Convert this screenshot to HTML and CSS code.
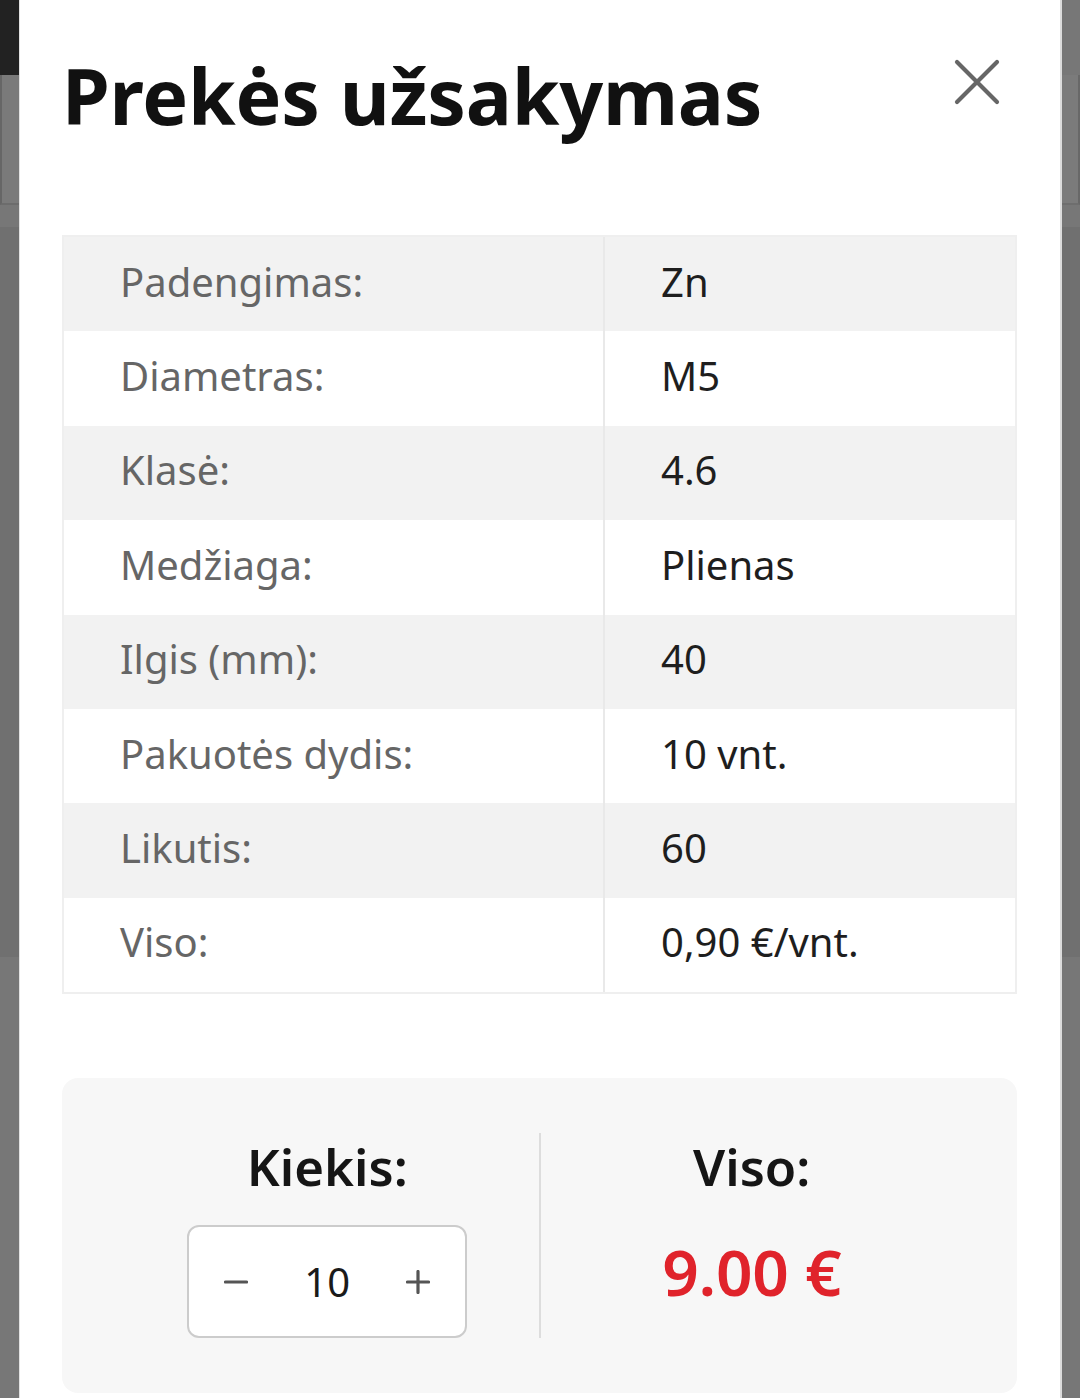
FILE: index.html
```html
<!DOCTYPE html>
<html lang="lt">
<head>
<meta charset="utf-8">
<title>Prekės užsakymas</title>
<link rel="stylesheet" href="styles.css">
</head>
<body>
<div class="backdrop">
  <div class="bg-dark"></div>
  <div class="bg-box-left"></div>
  <div class="bg-box-right"></div>
  <div class="bg-band"></div>
</div>
<div class="modal">
  <div class="modal-header">
    <h1 class="title">Prekės užsakymas</h1>
    <button class="close" aria-label="Uždaryti">
      <svg width="46" height="46" viewBox="0 0 46 46"><path d="M3 3 L43 43 M43 3 L3 43" stroke="#666" stroke-width="4.2" stroke-linecap="round" fill="none"/></svg>
    </button>
  </div>

  <div class="specs">
    <div class="row"><div class="cell label">Padengimas:</div><div class="cell value">Zn</div></div>
    <div class="row"><div class="cell label">Diametras:</div><div class="cell value">M5</div></div>
    <div class="row"><div class="cell label">Klasė:</div><div class="cell value">4.6</div></div>
    <div class="row"><div class="cell label">Medžiaga:</div><div class="cell value">Plienas</div></div>
    <div class="row"><div class="cell label">Ilgis (mm):</div><div class="cell value">40</div></div>
    <div class="row"><div class="cell label">Pakuotės dydis:</div><div class="cell value">10 vnt.</div></div>
    <div class="row"><div class="cell label">Likutis:</div><div class="cell value">60</div></div>
    <div class="row"><div class="cell label">Viso:</div><div class="cell value">0,90 €/vnt.</div></div>
  </div>

  <div class="order">
    <div class="order-col">
      <div class="order-label">Kiekis:</div>
      <div class="qty">
        <button class="qty-btn" aria-label="Mažinti">
          <svg width="24" height="24" viewBox="0 0 24 24"><path d="M1.5 12 H22.5" stroke="#555" stroke-width="3.2" stroke-linecap="round"/></svg>
        </button>
        <span class="qty-num">10</span>
        <button class="qty-btn" aria-label="Didinti">
          <svg width="24" height="24" viewBox="0 0 24 24"><path d="M1.5 12 H22.5 M12 1.5 V22.5" stroke="#555" stroke-width="3.2" stroke-linecap="round"/></svg>
        </button>
      </div>
    </div>
    <div class="order-divider"></div>
    <div class="order-col">
      <div class="order-label">Viso:</div>
      <div class="total">9.00 €</div>
    </div>
  </div>
</div>
</body>
</html>
```

FILE: styles.css
```css
* { box-sizing: border-box; }
html, body {
  margin: 0;
  height: 1398px;
  overflow: hidden;
}
body {
  background: #777777;
  font-family: "Noto Sans", "Open Sans", sans-serif;
  position: relative;
}
.backdrop { position: absolute; inset: 0; }
.bg-dark {
  position: absolute; left: 0; top: 0; width: 20px; height: 75px; background: #222222;
}
.bg-box-left {
  position: absolute; left: 0; top: 75px; width: 20px; height: 130px;
  background: #7a7a7a; border-left: 2px solid #666; border-bottom: 2px solid #6c6c6c;
}
.bg-box-right {
  position: absolute; right: 0; top: 75px; width: 20px; height: 130px;
  background: #7b7b7b; border-right: 2px solid #686868; border-bottom: 2px solid #6e6e6e;
}
.bg-band {
  position: absolute; left: 0; top: 227px; width: 100%; height: 730px;
  background: #707070;
}
.modal {
  position: relative;
  margin-left: 19px;
  width: 1043px;
  min-height: 1500px;
  background: #ffffff;
  border-left: 1px solid #e2e2e2;
  border-right: 2px solid #dcdcdc;
  padding: 49px 43px 0 42px;
}
.modal-header {
  display: flex;
  justify-content: space-between;
  align-items: flex-start;
}
.title {
  margin: 0;
  font-size: 77px;
  line-height: 94px;
  font-weight: 700;
  color: #111111;
  letter-spacing: -0.2px;
}
.close {
  border: 0;
  background: none;
  padding: 0;
  margin: 10px 17px 0 0;
  width: 46px;
  height: 46px;
  display: flex;
}
.specs {
  margin-top: 92px;
  border: 2px solid #efefef;
}
.row {
  display: grid;
  grid-template-columns: 541px 1fr;
  height: 94.4px;
}
.row:nth-child(odd) { background: #f2f2f2; }
.row:nth-child(even) { background: #ffffff; }
.cell {
  display: flex;
  align-items: center;
  padding-left: 56px;
  padding-bottom: 6px;
  font-size: 40px;
}
.label {
  color: #666666;
  border-right: 2px solid #e9e9e9;
}
.value {
  color: #1e1e1e;
  padding-left: 56px;
}
.order {
  margin-top: 84px;
  background: #f7f7f7;
  border-radius: 16px;
  padding: 55px 54px;
  display: grid;
  grid-template-columns: 1fr 2px 1fr;
}
.order-divider { background: #dddddd; }
.order-col {
  display: flex;
  flex-direction: column;
  align-items: center;
}
.order-label {
  font-size: 51px;
  line-height: 60px;
  font-weight: 600;
  color: #151515;
  margin-top: 3px;
}
.qty {
  margin-top: 29px;
  width: 280px;
  height: 113px;
  background: #ffffff;
  border: 2px solid #cccccc;
  border-radius: 12px;
  display: flex;
  align-items: center;
  justify-content: space-between;
  padding: 0 35px;
}
.qty-btn {
  border: 0;
  background: none;
  padding: 0;
  display: flex;
}
.qty-num {
  font-size: 40px;
  color: #1a1a1a;
}
.total {
  margin-top: 36px;
  font-size: 64px;
  line-height: 79px;
  font-weight: 600;
  color: #e0232b;
  letter-spacing: -0.3px;
}
```
